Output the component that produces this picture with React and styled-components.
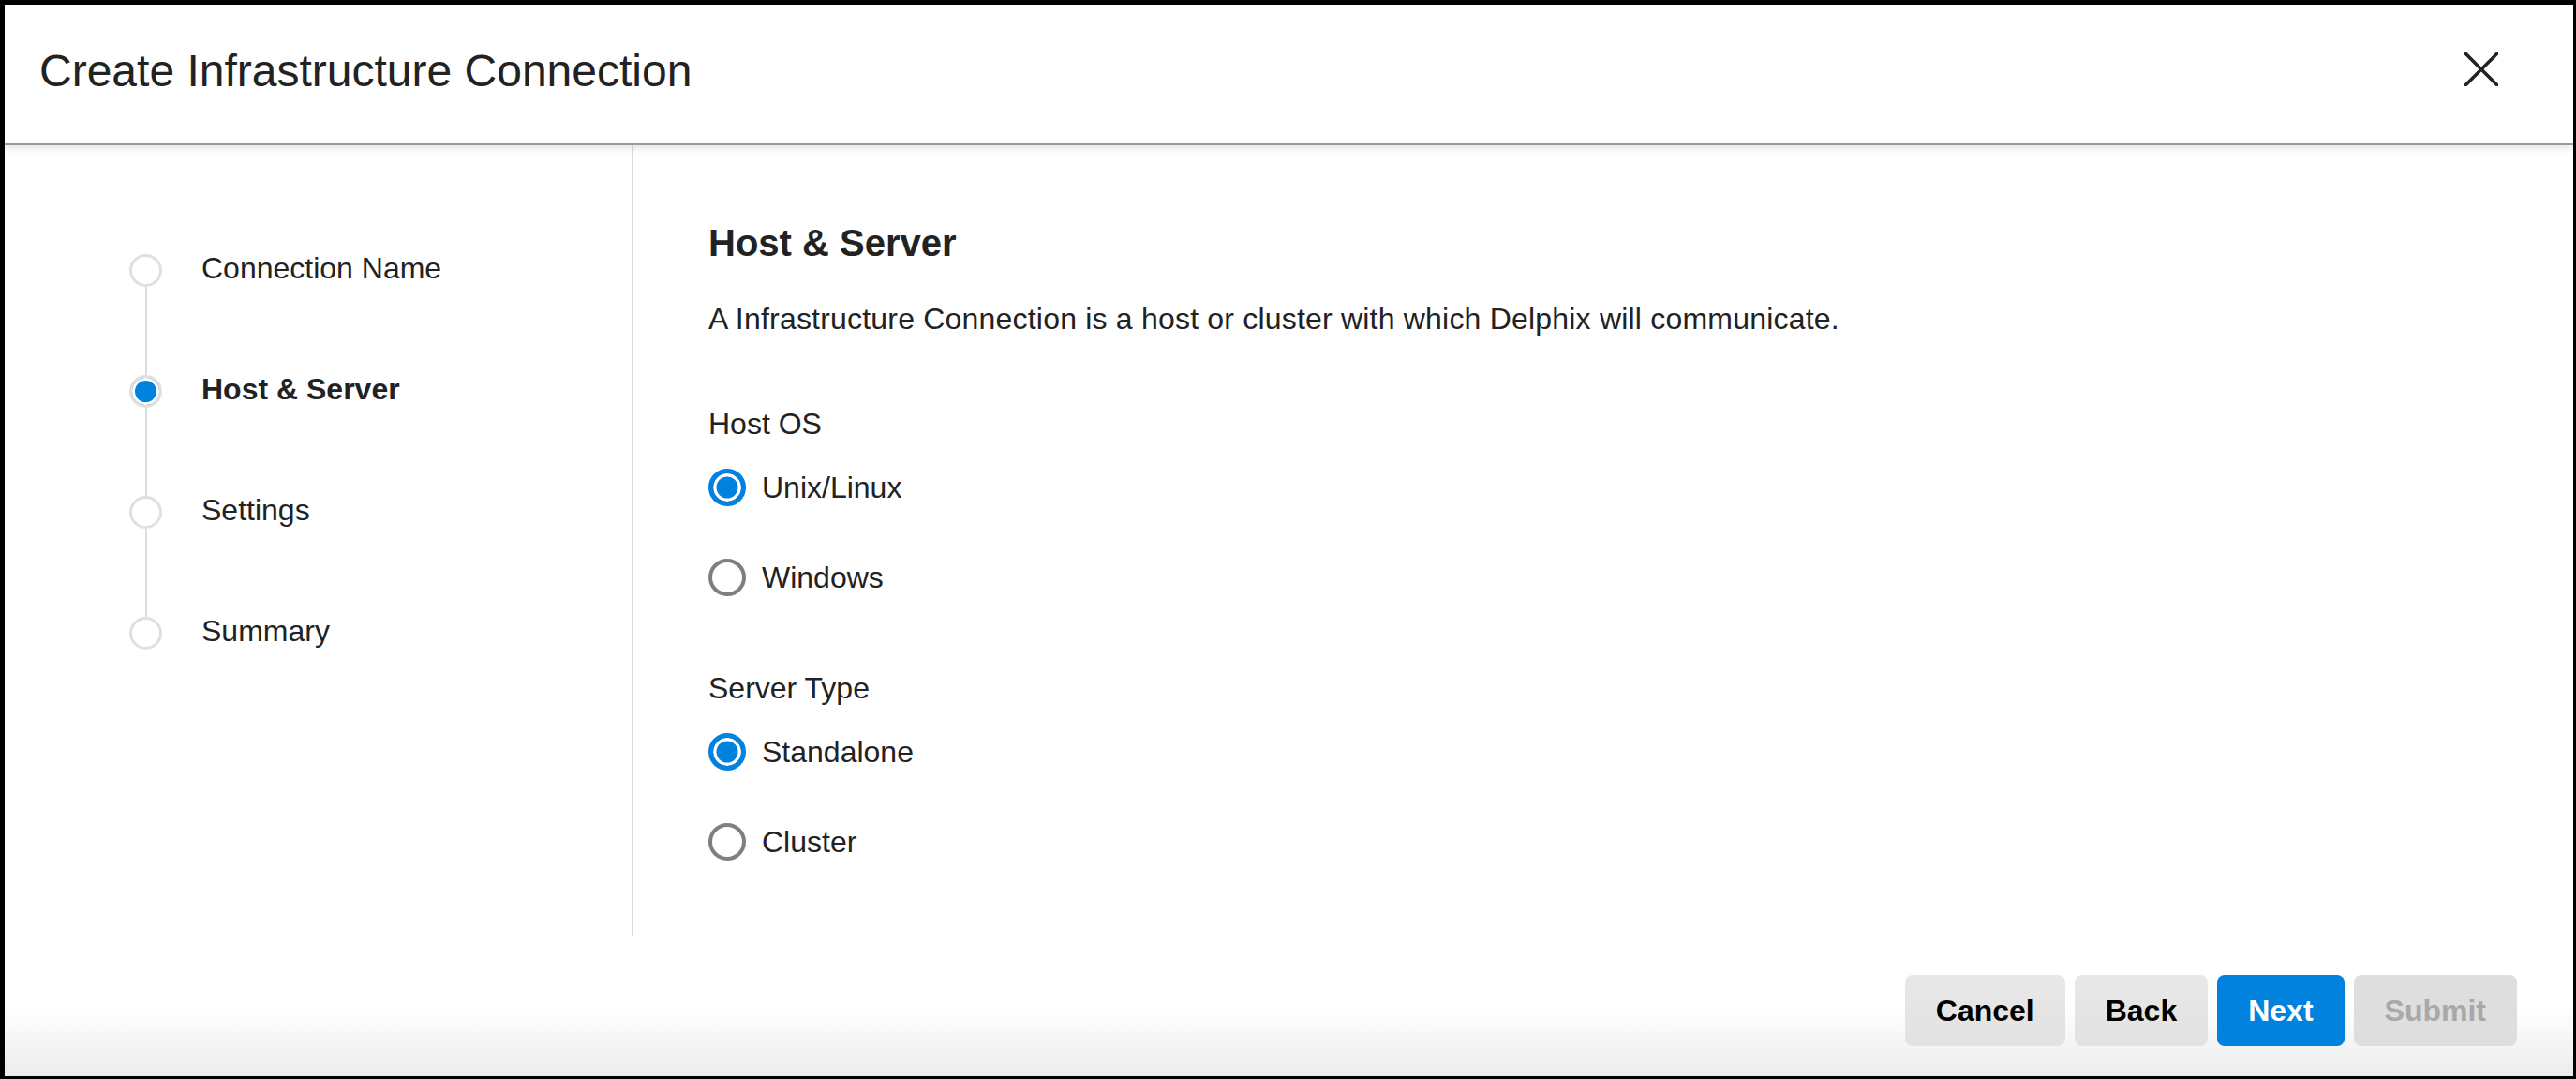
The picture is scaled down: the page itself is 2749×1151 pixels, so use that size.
import React from "react";
import styled, { createGlobalStyle } from "styled-components";

const GlobalStyle = createGlobalStyle`
  html, body {
    margin: 0;
    padding: 0;
    background: #000;
  }
  body {
    font-family: "Liberation Sans", Arial, Helvetica, sans-serif;
    color: #222;
  }
`;

const steps = [
  { label: "Connection Name" },
  { label: "Host & Server", active: true },
  { label: "Settings" },
  { label: "Summary" },
];

const hostOptions = [
  { label: "Unix/Linux", checked: true },
  { label: "Windows" },
];

const serverOptions = [
  { label: "Standalone", checked: true },
  { label: "Cluster" },
];

function CloseIcon() {
  return (
    <svg width="36" height="36" viewBox="0 0 36 36">
      <line x1="1.5" y1="1.5" x2="34.5" y2="34.5" stroke="#222" strokeWidth="3.6" strokeLinecap="round" />
      <line x1="34.5" y1="1.5" x2="1.5" y2="34.5" stroke="#222" strokeWidth="3.6" strokeLinecap="round" />
    </svg>
  );
}

function RadioGroup({ title, options, spacing }) {
  return (
    <Field spacing={spacing}>
      <FieldLabel>{title}</FieldLabel>
      <RadioList>
        {options.map((o) => (
          <RadioRow key={o.label}>
            <Radio checked={o.checked} />
            <span>{o.label}</span>
          </RadioRow>
        ))}
      </RadioList>
    </Field>
  );
}

export default function App() {
  return (
    <>
      <GlobalStyle />
      <Frame>
        <Modal>
          <Header>
            <Title>Create Infrastructure Connection</Title>
            <CloseButton aria-label="close">
              <CloseIcon />
            </CloseButton>
          </Header>
          <Body>
            <Sidebar>
              <StepList>
                {steps.map((s, i) => (
                  <Step key={s.label} last={i === steps.length - 1}>
                    <StepDot active={s.active} />
                    <StepLabel active={s.active}>{s.label}</StepLabel>
                  </Step>
                ))}
              </StepList>
            </Sidebar>
            <Content>
              <Heading>Host &amp; Server</Heading>
              <Description>
                A Infrastructure Connection is a host or cluster with which Delphix will communicate.
              </Description>
              <RadioGroup title="Host OS" options={hostOptions} spacing={72} />
              <RadioGroup title="Server Type" options={serverOptions} spacing={78} />
            </Content>
          </Body>
          <Footer>
            <Button>Cancel</Button>
            <Button>Back</Button>
            <Button primary>Next</Button>
            <Button disabled>Submit</Button>
          </Footer>
        </Modal>
      </Frame>
    </>
  );
}

const Frame = styled.div`
  box-sizing: border-box;
  width: 100vw;
  height: 100vh;
  padding: 5px 3px 3px 5px;
  background: #000;
`;

const Modal = styled.div`
  display: flex;
  flex-direction: column;
  height: 100%;
  background: #fff;
`;

const Header = styled.div`
  position: relative;
  z-index: 1;
  flex: 0 0 auto;
  height: 150px;
  box-sizing: border-box;
  padding: 0 80px 6px 37px;
  display: flex;
  align-items: center;
  justify-content: space-between;
  border-bottom: 2px solid #9a9a9a;
  box-shadow: 0 3px 8px rgba(0, 0, 0, 0.12);
`;

const Title = styled.h1`
  margin: 0;
  font-size: 48px;
  line-height: 56px;
  font-weight: 400;
  color: #222;
`;

const CloseButton = styled.button`
  border: none;
  background: none;
  padding: 0;
  display: flex;
  cursor: pointer;
  margin-top: -4px;
`;

const Body = styled.div`
  display: flex;
  height: 843px;
`;

const Sidebar = styled.div`
  width: 669px;
  flex: 0 0 auto;
  border-right: 2px solid #dcdcdc;
`;

const StepList = styled.ol`
  list-style: none;
  margin: 0;
  padding: 69px 0 0 133px;
`;

const Step = styled.li`
  position: relative;
  display: flex;
  align-items: center;
  gap: 42px;
  height: 129px;

  &::after {
    content: "";
    display: ${(p) => (p.last ? "none" : "block")};
    position: absolute;
    left: 16.5px;
    top: 82px;
    width: 2px;
    height: 94px;
    background: #dcdcdc;
  }
`;

const StepDot = styled.span`
  box-sizing: border-box;
  width: 35px;
  height: 35px;
  flex: 0 0 auto;
  border-radius: 50%;
  border: 3px solid #e0e0e0;
  background: ${(p) => (p.active ? "#0082de" : "#fff")};
  box-shadow: ${(p) => (p.active ? "inset 0 0 0 3px #fff" : "none")};
`;

const StepLabel = styled.span`
  font-size: 32px;
  line-height: 40px;
  font-weight: ${(p) => (p.active ? 700 : 400)};
  color: #222;
  margin-top: -6px;
`;

const Content = styled.div`
  flex: 1;
  padding: 80px 0 0 80px;
`;

const Heading = styled.h2`
  margin: 0;
  font-size: 40px;
  line-height: 48px;
  font-weight: 700;
  color: #222;
`;

const Description = styled.p`
  margin: 37px 0 0;
  font-size: 32px;
  line-height: 40px;
  letter-spacing: 0.2px;
  color: #222;
`;

const Field = styled.div`
  margin-top: ${(p) => p.spacing}px;
`;

const FieldLabel = styled.div`
  font-size: 32px;
  line-height: 40px;
  color: #222;
`;

const RadioList = styled.div`
  display: flex;
  flex-direction: column;
  gap: 56px;
  margin-top: 28px;
`;

const RadioRow = styled.label`
  display: flex;
  align-items: center;
  gap: 17px;
  height: 40px;
  font-size: 32px;
  line-height: 40px;
  color: #222;
`;

const Radio = styled.span`
  box-sizing: border-box;
  width: 40px;
  height: 40px;
  flex: 0 0 auto;
  border-radius: 50%;
  border: ${(p) => (p.checked ? "5px solid #0082de" : "4px solid #7f7f7f")};
  background: ${(p) => (p.checked ? "#0082de" : "#fff")};
  box-shadow: ${(p) => (p.checked ? "inset 0 0 0 3.5px #fff" : "none")};
`;

const Footer = styled.div`
  flex: 1;
  display: flex;
  justify-content: flex-end;
  align-items: flex-start;
  gap: 10px;
  padding: 42px 60px 0 0;
  background: linear-gradient(to bottom, #fff 50%, #ececec 100%);
`;

const Button = styled.button`
  height: 76px;
  padding: 0 33px;
  border: none;
  border-radius: 8px;
  font-family: "Liberation Sans", Arial, Helvetica, sans-serif;
  font-size: 32px;
  font-weight: 700;
  cursor: ${(p) => (p.disabled ? "default" : "pointer")};
  color: ${(p) => (p.primary ? "#fff" : p.disabled ? "#a8a8a8" : "#000")};
  background: ${(p) =>
    p.primary
      ? "#0082de"
      : p.disabled
      ? "#dedede"
      : "linear-gradient(to bottom, #e8e8e8, #e2e2e2)"};
`;
